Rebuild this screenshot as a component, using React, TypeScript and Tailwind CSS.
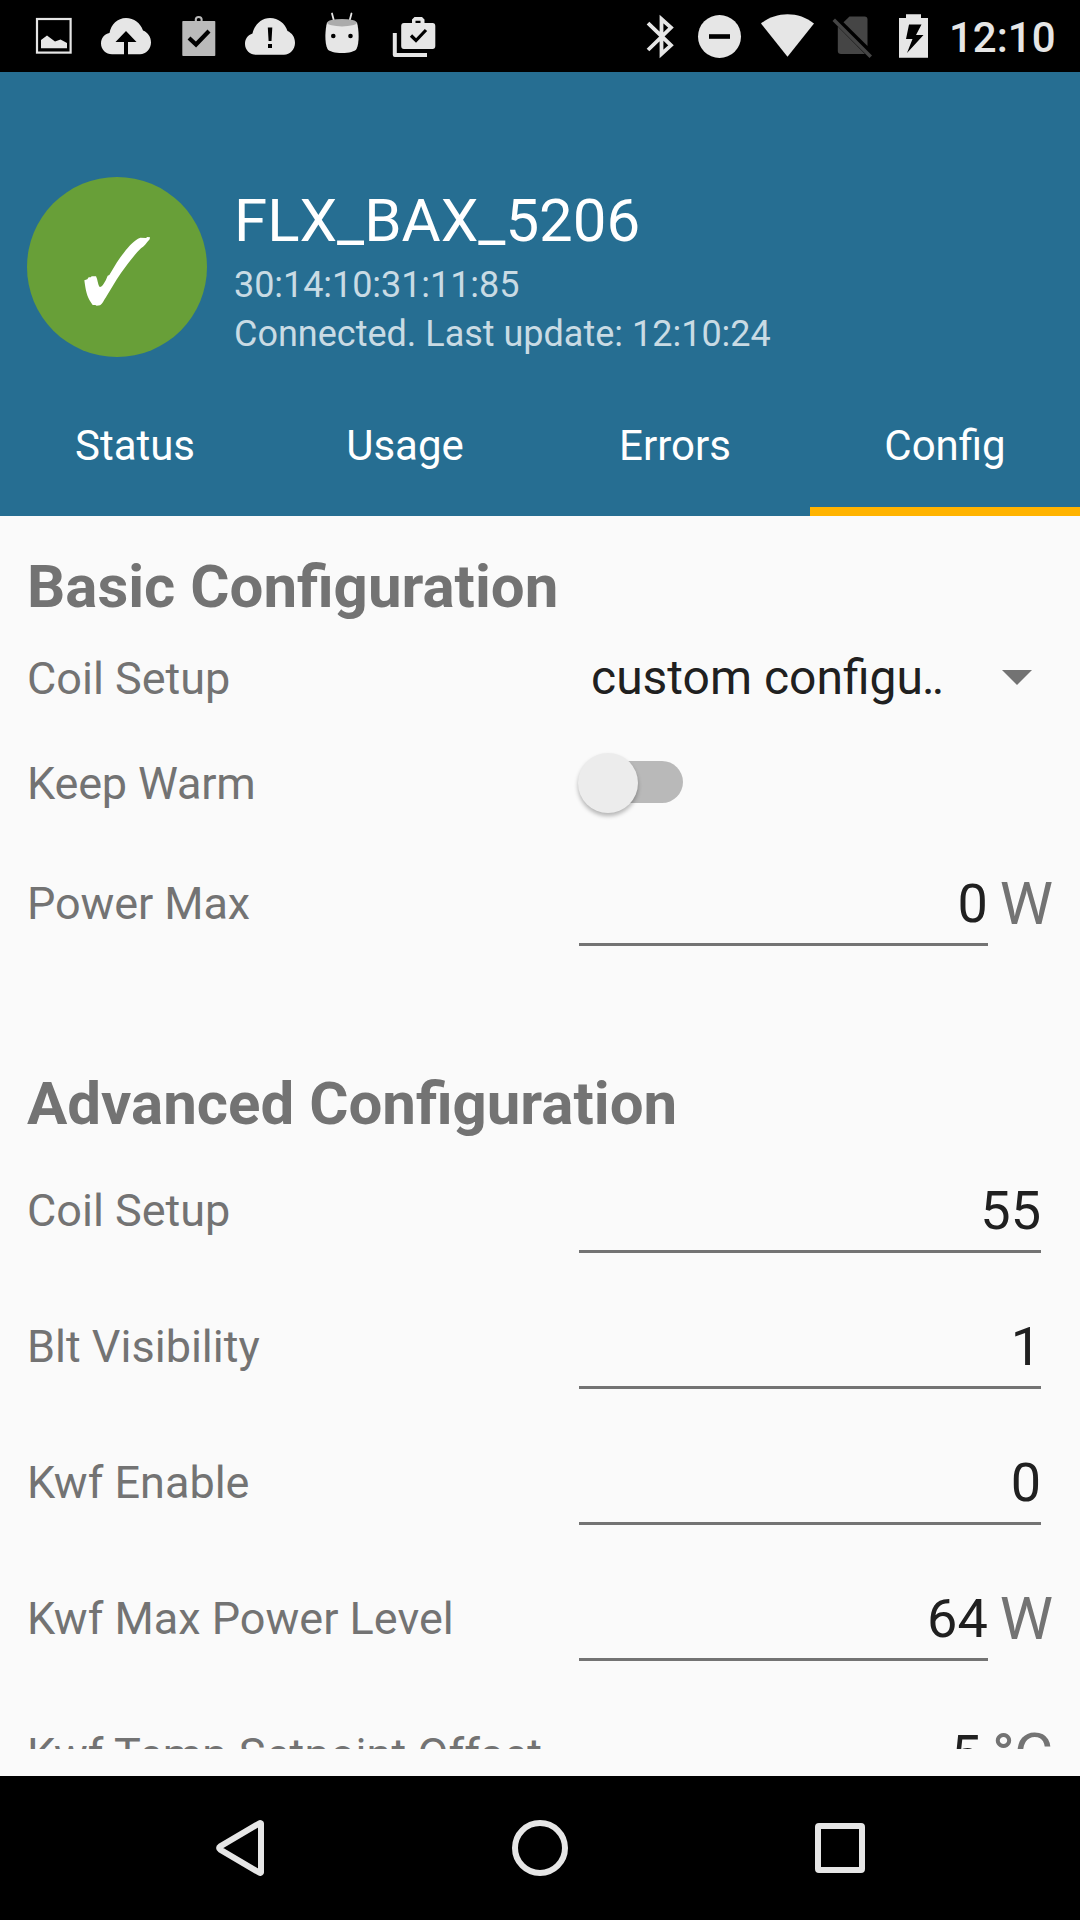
import React from "react";

type CellProps = { x: number; w: number; children: React.ReactNode };

// A slice of the 72px status bar; the children use bar coordinates.
function Cell({ x, w, children }: CellProps) {
  return (
    <svg width={w} height={72} viewBox={`${x} 0 ${w} 72`} fill="#e6e6e6" className="block shrink-0">
      {children}
    </svg>
  );
}

function StatusBar() {
  return (
    <div className="flex h-[72px] w-full shrink-0 items-center justify-between bg-black pr-[24px] pl-[18px]">
      <div className="flex">
        <Cell x={18} w={72}>
          <rect x="37" y="19" width="33.6" height="33.6" fill="none" stroke="#e6e6e6" strokeWidth="2.2" />
          <path d="M41 48.3V40L47 35.5L55 41.5L60.5 39.5L67 43V48.3Z" />
        </Cell>
        <Cell x={90} w={72}>
          <path
            fillRule="evenodd"
            d="M112 54.3C106 54.3 101 49.5 101 43.5C101 38 104.500 34 109.500 33C111 24.500 117.500 18 126 18C134 18 140.500 23 143 30.500C148 32.500 151 37 151 42.500C151 49 146 54.300 140 54.300H128V42H136.500L126 31L115.500 42H124V54.300Z"
          />
        </Cell>
        <Cell x={162} w={72}>
          <rect x="182.300" y="21" width="33" height="35" rx="0.800" fill="#bababa" />
          <circle cx="198.700" cy="20" r="3" fill="none" stroke="#bababa" strokeWidth="2" />
          <path d="M189 38L196 44.500L209 31" fill="none" stroke="#000" strokeWidth="4.200" />
        </Cell>
        <Cell x={234} w={72}>
          <path d="M256 54.800C250 54.800 245 50 245 44C245 38.500 248 35 252.500 33.500C254.500 24.500 261.500 18 270 18C278.500 18 285 23.500 287.500 31C292 33 295 37 295 43C295 49.500 290 54.800 284 54.800Z" />
          <path d="M267.800 27.500H272.300L271.500 41H268.600ZM268 44H272V48H268Z" fill="#000" />
        </Cell>
        <Cell x={306} w={72}>
          <path d="M332 13.500L334 21M351.500 13.500L349.500 21" stroke="#e6e6e6" strokeWidth="1.800" strokeLinecap="round" />
          <path d="M327 22.500C325 30 324.500 43 327.500 49C329 51.500 335 53 342 53C349 53 355 51.500 356.500 49C359.500 43 359 30 357 22.500Z" />
          <ellipse cx="342" cy="22.700" rx="14.800" ry="3.700" fill="#ababab" />
          <circle cx="333.300" cy="36" r="2.300" fill="#000" />
          <circle cx="350.500" cy="36" r="2.300" fill="#000" />
        </Cell>
        <Cell x={378} w={72}>
          <path
            fillRule="evenodd"
            d="M404 23H412V19.500L414.500 17H422L424.500 19.500V23H432.500Q435.300 23 435.300 26V46Q435.300 49 432.500 49H404Q401.200 49 401.200 46V26Q401.200 23 404 23ZM415.500 23H420.500V20.700H415.500Z"
          />
          <path d="M411 35.500L416 40.500L426 30" fill="none" stroke="#000" strokeWidth="3.200" />
          <path d="M394.800 33V55H427" fill="none" stroke="#e6e6e6" strokeWidth="4" strokeLinejoin="round" />
        </Cell>
      </div>
      <div className="flex items-center">
        <Cell x={630} w={60}>
          <path
            d="M648 23.200L671 45.300L661.500 54V19L671 27.500L648 50"
            fill="none"
            stroke="#e6e6e6"
            strokeWidth="3.800"
            strokeLinejoin="miter"
          />
        </Cell>
        <Cell x={690} w={60}>
          <circle cx="719.500" cy="36.500" r="21.500" />
          <rect x="709" y="34.200" width="21" height="4.600" fill="#000" />
        </Cell>
        <Cell x={750} w={75}>
          <path d="M761 23.500C776 11 799 11 814 23.500L787.500 56.800Z" />
        </Cell>
        <Cell x={825} w={58}>
          <g fill="#454545">
            <path d="M843.500 22.300L849.500 16.500H864.500Q867.500 16.500 867.500 19.500V46Z" />
            <path d="M837.800 26.500L865 54H841Q837.800 54 837.800 51Z" />
            <path d="M832.500 21L835 18.600L872 55.500L869.500 58Z" />
          </g>
        </Cell>
        <Cell x={883} w={66}>
          <path fillRule="evenodd" d="M899 18H906V14.300H921V18H928V57.800H899ZM909 24.500L906 39H912.500L907 53L923.500 35H916L921.500 24.500Z" />
        </Cell>
        <span className="w-[107px] pt-[4px] text-[42px] leading-[68px] font-medium text-[#e6e6e6]">12:10</span>
      </div>
    </div>
  );
}

const tabs = ["Status", "Usage", "Errors", "Config"];

function Header() {
  return (
    <header className="flex h-[444px] w-full shrink-0 flex-col bg-[#266e92] pt-[105px]">
      <div className="flex h-[180px] gap-[27px] pl-[27px]">
        <div className="size-[180px] rounded-full bg-[#689f38]">
          <svg viewBox="81 81 540 540" className="size-full" fill="#fff">
            <path d="M253 391L262 388L266 382L272 382L275 379L288 379L291 386C294 398 296 409 300 411C306 411 316 396 323 377L328 375L350 338C372 305 396 276 414 266L421 263L438 264L442 261L450 262L449 268C438 280 434 289 423 295C398 319 380 347 363 369C345 395 333 418 320 438C313 449 306 463 300 466L290 467L286 465L278 465L274 459C260 440 257 420 253 391Z" />
          </svg>
        </div>
        <div className="flex flex-col pt-[8px]">
          <h1 className="text-[60px] leading-[72px] text-white">FLX_BAX_5206</h1>
          <p className="mt-[4px] text-[36px] leading-[49px] tracking-[-0.06px] text-[#c9dbe4]">30:14:10:31:11:85</p>
          <p className="text-[36px] leading-[49px] text-[#c9dbe4]">Connected. Last update: 12:10:24</p>
        </div>
      </div>
      <nav className="mt-auto grid h-[142px] grid-cols-4">
        {tabs.map((t) => (
          <div
            key={t}
            className={
              t === "Config"
                ? "h-[142px] border-b-[9px] border-[#ffb300] text-center text-[42px] leading-[143px] text-white"
                : "h-[142px] text-center text-[42px] leading-[143px] text-white"
            }
          >
            {t}
          </div>
        ))}
      </nav>
    </header>
  );
}

function Label({ children }: { children: React.ReactNode }) {
  return <span className="w-[540px] shrink-0 text-[45px] leading-[54px] whitespace-nowrap">{children}</span>;
}

type FieldProps = { label: React.ReactNode; value: string; unit?: React.ReactNode };

function Field({ label, value, unit }: FieldProps) {
  return (
    <div className="flex h-[136px] shrink-0 items-center">
      <Label>{label}</Label>
      <div className="mx-[12px] h-[84px] flex-1 border-b-[3px] border-[#737373] text-right text-[54px] leading-[84px] text-[#202020]">
        {value}
      </div>
      {unit && <span className="text-[60px] leading-[72px]">{unit}</span>}
    </div>
  );
}

function Heading({ children }: { children: string }) {
  return <h2 className="text-[60px] leading-[70px] font-bold">{children}</h2>;
}

function Config() {
  return (
    <main className="flex h-[1233px] shrink-0 flex-col overflow-hidden px-[27px] pt-[36px] text-[#737373]">
      <Heading>Basic Configuration</Heading>
      <div className="flex h-[114px] shrink-0 items-center">
        <Label>Coil Setup</Label>
        <div className="flex flex-1 items-center justify-between pr-[21px] pb-[2px] pl-[24px]">
          <span className="text-[48px] leading-[56px] text-[#202020]">
            custom configu<span className="-ml-[1px] tracking-[-2.8px]">..</span>
          </span>
          <svg className="mb-[2px]" width="30" height="15" viewBox="0 0 30 15" fill="#737373">
            <path d="M0 0H30L15 15Z" />
          </svg>
        </div>
      </div>
      <div className="flex h-[96px] shrink-0 items-center">
        <Label>
          <span className="tracking-[-0.18px]">Keep Warm</span>
        </Label>
        <div className="mb-[4px] ml-[16px] flex h-[42px] w-[100px] items-center rounded-full bg-[#b9b9b9]">
          <div className="-ml-[5px] mt-[1px] size-[60px] shrink-0 rounded-full bg-[#ececec] shadow-[0_3px_4px_rgba(0,0,0,0.28)]" />
        </div>
      </div>
      <div className="mb-[97px] pt-1">
        <Field label={<span className="tracking-[-0.1px]">Power Max</span>} value="0" unit="W" />
      </div>
      <Heading>Advanced Configuration</Heading>
      <div className="mt-[4px]">
        <Field label="Coil Setup" value="55" />
        <Field label="Blt Visibility" value="1" />
        <Field label="Kwf Enable" value="0" />
        <Field label="Kwf Max Power Level" value="64" unit="W" />
        <Field
          label={<span className="tracking-[0.09px]">Kwf Temp Setpoint Offset</span>}
          value="5"
          unit={
            <>
              <span className="-ml-[1px] font-medium tracking-[-1px]">°</span>C
            </>
          }
        />
      </div>
    </main>
  );
}

function NavBar() {
  return (
    <div className="mt-auto flex h-[144px] shrink-0 items-center justify-center bg-black">
      {[
        <path key="back" d="M63 17.500L62 17L22.200 40.400Q20 42 22.200 43.600L62 67L63 66.500Z" />,
        <circle key="home" cx="42" cy="42" r="25" />,
        <rect key="recent" x="20" y="20" width="44" height="44" rx="1" />,
      ].map((shape, i) => (
        <div key={i} className="flex w-[300px] justify-center">
          <svg width="84" height="84" viewBox="0 0 84 84" fill="none" stroke="#e6e6e6" strokeWidth="6" strokeLinejoin="round">
            {shape}
          </svg>
        </div>
      ))}
    </div>
  );
}

export default function App() {
  return (
    <div className="flex h-[1920px] w-[1080px] flex-col overflow-hidden bg-[#fafafa] font-['Roboto',sans-serif]">
      <StatusBar />
      <Header />
      <Config />
      <NavBar />
    </div>
  );
}
